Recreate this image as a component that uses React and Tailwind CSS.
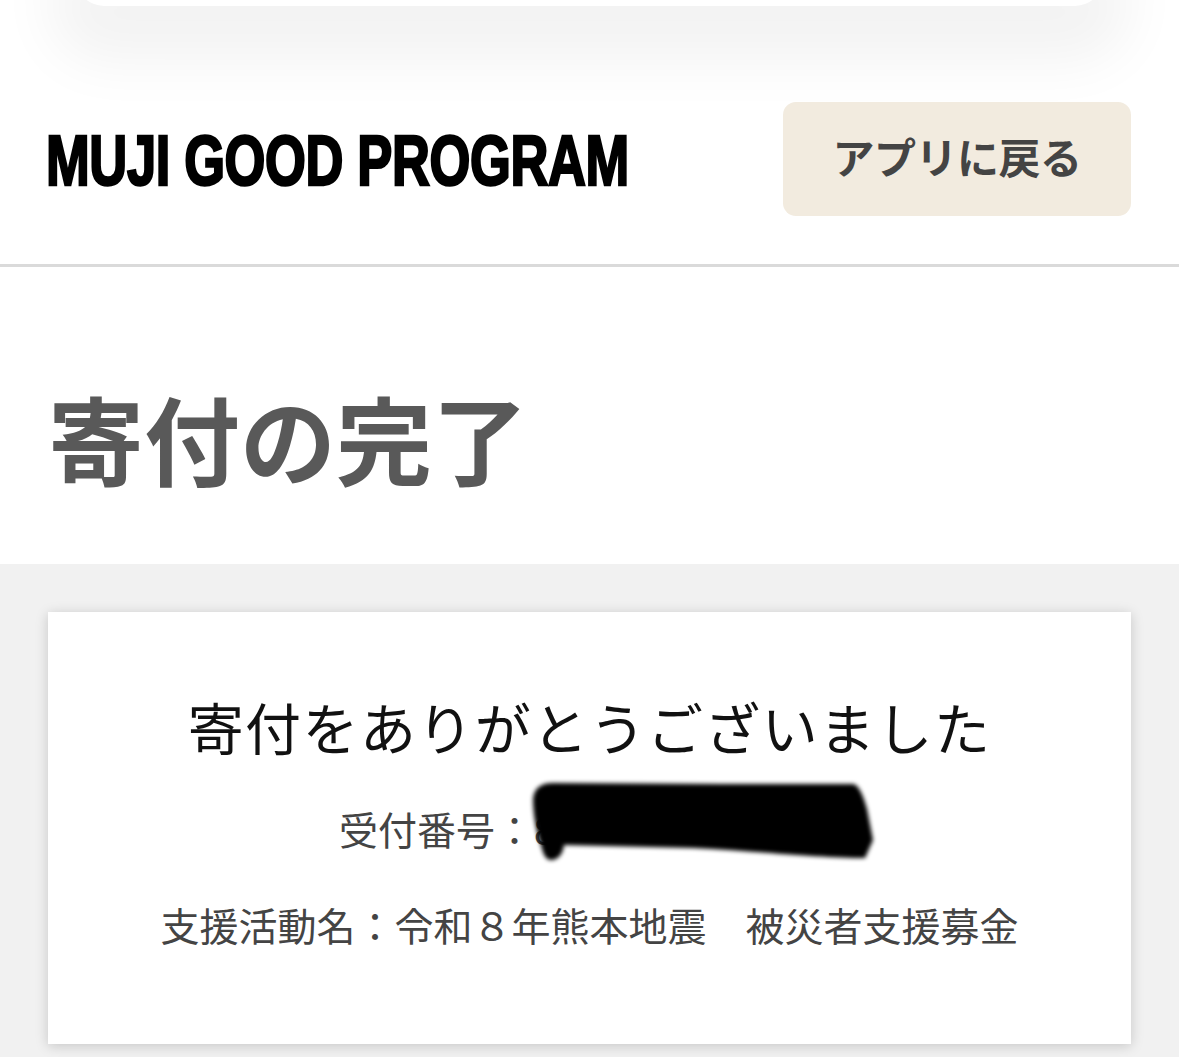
// muji good program - donation complete screen
const JP = 'font-["Liberation_Sans","Noto_Sans_CJK_JP",sans-serif]'

// black marker over the receipt number
function Redaction() {
  return (
    <svg className="absolute left-[475px] top-[-25px]" width="360" height="95" viewBox="0 0 360 95">
      <defs>
        <filter id="soft" x="-5%" y="-15%" width="110%" height="130%">
          <feGaussianBlur stdDeviation="2.2" />
        </filter>
      </defs>
      <path
        d="M10 24 C11 14 17 8 30 8 L200 9 L330 9 C336 10 340 20 344 34 L350 65 L342 83 C300 83 230 76 170 73 L41 70 C40 78 36 85 28 85 C22 85 20 78 18 70 C14 60 10 40 10 24 Z"
        fill="#000"
        filter="url(#soft)"
      />
    </svg>
  )
}

export default function App() {
  return (
    <div className={`h-[1057px] overflow-hidden bg-white ${JP}`}>
      {/* bottom edge of the sheet above */}
      <div className="h-[46px] -mt-[40px] mx-[76px] rounded-b-[28px] bg-white shadow-[0_30px_56px_26px_rgba(0,0,0,0.05)]" />

      {/* header */}
      <header className="h-[261px] pl-[46px] pr-[48px] pt-[96px] flex justify-between items-start border-b-[3px] border-[#dadada]">
        <div className="w-[700px] shrink-0 mt-[19px] text-[70px] leading-[80px] font-bold text-black whitespace-nowrap origin-left scale-x-[0.75] tracking-[-0.5px] [-webkit-text-stroke:2.5px_black]">
          MUJI GOOD PROGRAM
        </div>
        <button className="w-[348px] h-[114px] shrink-0 rounded-[13px] bg-[#f2ebdf] text-[#444444] text-[42px] font-bold tracking-[-0.5px]">
          アプリに戻る
        </button>
      </header>

      {/* title */}
      <div className="h-[297px] pl-[48px] pt-[126px]">
        <h1 className="text-[96px] leading-[104px] font-bold text-[#595959]">寄付の完了</h1>
      </div>

      {/* content */}
      <main className="h-[600px] bg-[#f1f1f1] pt-[48px] px-[48px]">
        <div className="h-[432px] bg-white shadow-[0_2px_12px_rgba(0,0,0,0.18)] pt-[84px] flex flex-col items-center">
          <p className="text-[56px] leading-[70px] text-[#111111] tracking-[1.4px]">寄付をありがとうございました</p>
          <div className="relative w-full h-[70px] mt-[34px] pl-[291px] text-[39px] leading-[64px] text-[#444444]">
            受付番号：8
            <Redaction />
          </div>
          <p className="mt-[33px] text-[39px] leading-[50px] text-[#444444] whitespace-pre">支援活動名：令和８年熊本地震　被災者支援募金</p>
        </div>
      </main>
    </div>
  )
}
